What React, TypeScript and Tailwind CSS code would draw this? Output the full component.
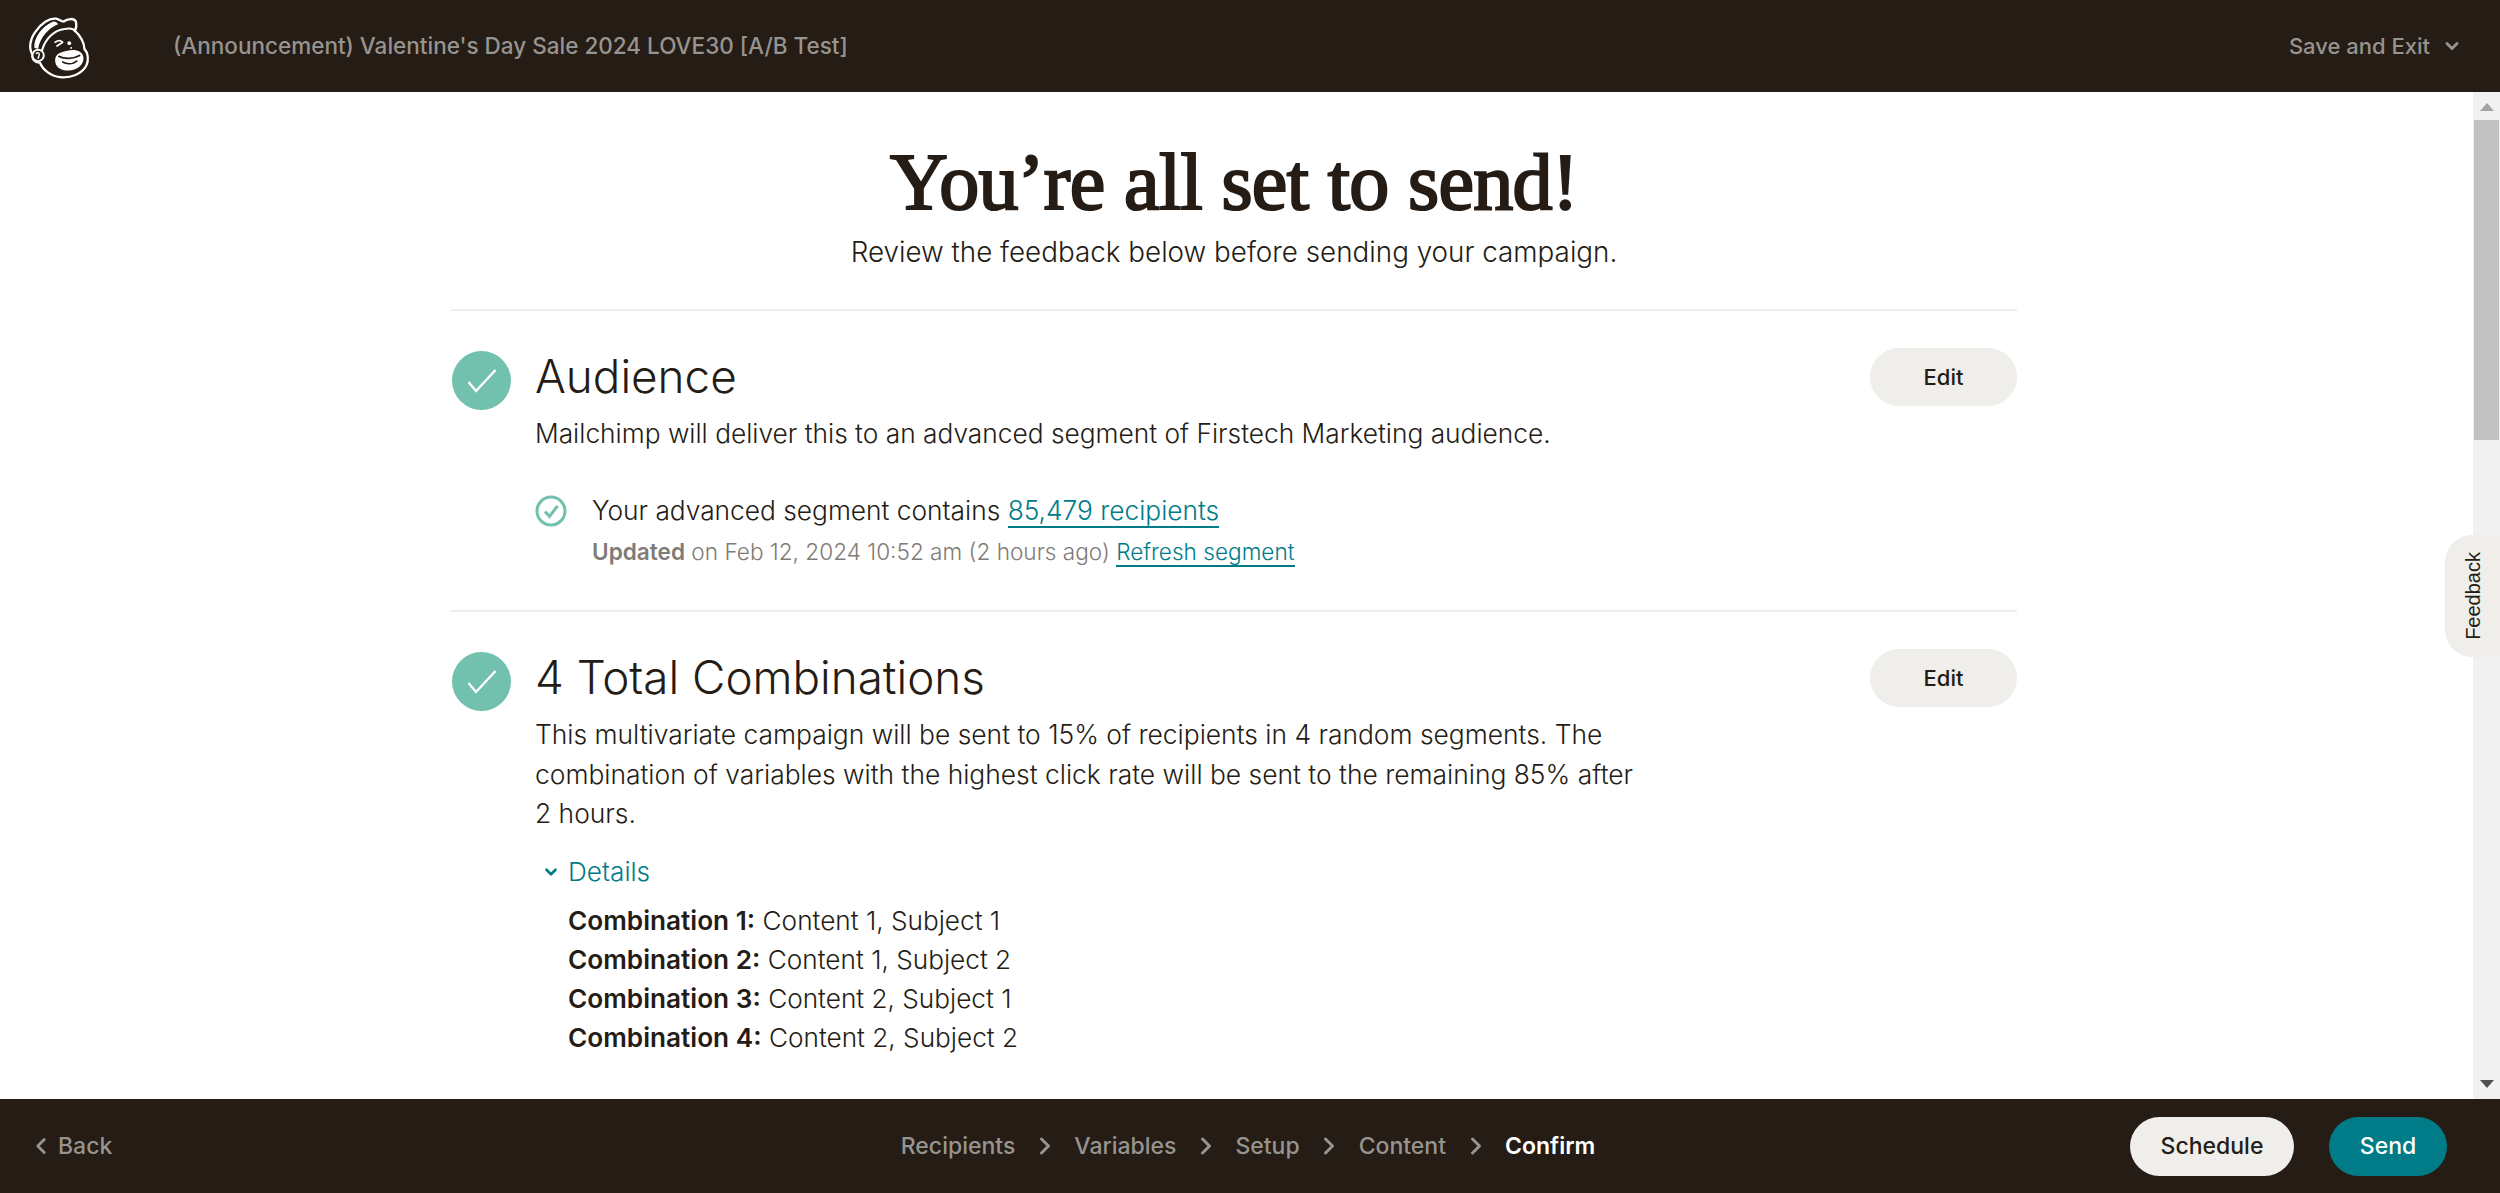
import React from "react";
import { ChevronDown, ChevronLeft, ChevronRight } from "lucide-react";

const Logo = () => (
  <svg viewBox="0 0 70 70" className="h-[66px] w-[66px]" fill="none" strokeLinecap="round" strokeLinejoin="round">
    <path d="M9 44C5 38 6 28 12 20 18 11 27 5 34 6c4 1 6 3 8 3 4-3 11-4 13 0 1 4 0 8-1 10 6 5 10 13 10 19 4 4 5 12 2 18-5 9-16 13-28 12-10-1-18-8-21-15-5 0-9-4-8-9Z" fill="#241c15" stroke="#fff" strokeWidth="2.4" />
    <path d="M11 37C10 28 18 14 31 9c3 0 5 2 5 3-10 4-19 14-21 26Z" fill="#fff" />
    <path d="M19 40c4-14 14-22 24-23 5-1 9-1 11 2" stroke="#fff" strokeWidth="2.2" />
    <circle cx="15" cy="45" r="6" fill="#241c15" stroke="#fff" strokeWidth="2" />
    <path d="M13 43c2-2 4 0 3 2l-1 3" stroke="#fff" strokeWidth="1.5" />
    <path d="M33 50c0-7 7-9 13-10 8-2 16 0 17 7 1 8-7 14-16 14-8 0-14-4-14-11Z" fill="#fff" />
    <path d="M37 46c6 3 15 3 22-1M41 52c5 3 11 2 15-1" stroke="#241c15" strokeWidth="1.8" />
    <path d="M33 31c3-2 6-2 8 0M35 35l6-4" stroke="#fff" strokeWidth="1.8" />
    <circle cx="48" cy="32" r="2" fill="#fff" />
    <circle cx="50" cy="37" r="1" fill="#fff" />
  </svg>
);

const BigCheck = () => (
  <div className="flex h-[59px] w-[59px] shrink-0 items-center justify-center rounded-full bg-[#72c0ae]">
    <svg viewBox="0 0 30 30" className="h-[30px] w-[30px]" fill="none" stroke="#fff" strokeWidth="2.4">
      <path d="M1.5 16L9 25 28.5 4" />
    </svg>
  </div>
);

const SmallCheck = () => (
  <svg viewBox="0 0 32 32" className="h-[32px] w-[32px] shrink-0" fill="none" stroke="#72c0ae" strokeWidth="3">
    <circle cx="16" cy="16" r="14" />
    <path d="M10 16.5l4.5 5L22.5 11" />
  </svg>
);

const EditButton = () => (
  <button className="h-[58px] w-[147px] shrink-0 rounded-full bg-[#efeeea] text-[22px] font-medium text-[#241c15]">Edit</button>
);

const steps = ["Recipients", "Variables", "Setup", "Content"];
const combinations = [
  ["Combination 1:", "Content 1, Subject 1"],
  ["Combination 2:", "Content 1, Subject 2"],
  ["Combination 3:", "Content 2, Subject 1"],
  ["Combination 4:", "Content 2, Subject 2"],
];

const App: React.FC = () => {
  return (
    <div className="flex h-screen flex-col overflow-hidden bg-white font-['Inter',sans-serif] text-[#241c15]">
      <header className="flex h-[92px] shrink-0 items-center justify-between bg-[#241c15] pl-[24px] pr-[38px]">
        <div className="flex items-center gap-[83px]">
          <Logo />
          <span className="text-[22.5px] font-medium text-[#97948f]">(Announcement) Valentine's Day Sale 2024 LOVE30 [A/B Test]</span>
        </div>
        <div className="flex items-center gap-[12px] text-[22px] font-medium text-[#97948f]">
          Save and Exit
          <ChevronDown size={20} strokeWidth={3.5} />
        </div>
      </header>

      <div className="relative flex min-h-0 flex-1">
        <main className="min-w-0 flex-1 overflow-hidden pl-[451px] pr-[456px]">
          <div className="pb-[39px] pt-[50px] text-center">
            <h1 className="font-['Liberation_Serif',serif] text-[80px] font-normal leading-[80px] tracking-[-0.65px] [-webkit-text-stroke:2.2px_#241c15]">You’re all set to send!</h1>
            <p className="mt-[12px] text-[27.8px] font-[350] leading-[36px]">Review the feedback below before sending your campaign.</p>
          </div>

          <section className="border-t-2 border-[#efeeea] pb-[42px] pt-[37px]">
            <div className="flex items-start gap-[24px]">
              <div className="ml-[1px] pt-[3px]"><BigCheck /></div>
              <div className="min-w-0 flex-1">
                <div className="flex items-center justify-between">
                  <h2 className="text-[45.8px] font-light leading-[58px]">Audience</h2>
                  <EditButton />
                </div>
                <p className="mt-[8px] text-[26.3px] font-[350] leading-[40px]">Mailchimp will deliver this to an advanced segment of Firstech Marketing audience.</p>
                <div className="mt-[37px] flex items-center gap-[25px]">
                  <SmallCheck />
                  <p className="text-[26.3px] font-[350] leading-[40px]">
                    Your advanced segment contains{" "}
                    <a className="border-b-2 border-[#007c89] text-[#007c89]">85,479 recipients</a>
                  </p>
                </div>
                <p className="ml-[57px] mt-[5px] text-[22.6px] font-[350] leading-[32px] text-[#7f7b76]">
                  <span className="font-semibold">Updated</span> on Feb 12, 2024 10:52 am (2 hours ago){" "}
                  <a className="border-b-2 border-[#007c89] text-[#007c89]">Refresh segment</a>
                </p>
              </div>
            </div>
          </section>

          <section className="border-t-2 border-[#efeeea] pt-[37px]">
            <div className="flex items-start gap-[24px]">
              <div className="ml-[1px] pt-[3px]"><BigCheck /></div>
              <div className="min-w-0 flex-1">
                <div className="flex items-center justify-between">
                  <h2 className="text-[45.8px] font-light leading-[58px]">4 Total Combinations</h2>
                  <EditButton />
                </div>
                <p className="mt-[8px] max-w-[1105px] text-[26.4px] font-[350] leading-[39.5px]">
                  This multivariate campaign will be sent to 15% of recipients in 4 random segments. The combination of variables with the highest click rate will be sent to the remaining 85% after 2 hours.
                </p>
                <div className="ml-[7px] mt-[18px] flex items-center gap-[8px] text-[26.2px] font-[350] leading-[40px] text-[#007c89]">
                  <ChevronDown size={18} strokeWidth={3.5} />
                  Details
                </div>
                <ul className="ml-[33px] mt-[9px] text-[26.2px] font-[350] leading-[39px]">
                  {combinations.map(([label, value]) => (
                    <li key={label}><b className="font-semibold">{label}</b> {value}</li>
                  ))}
                </ul>
              </div>
            </div>
          </section>
        </main>

        <aside className="flex w-[27px] shrink-0 flex-col items-center bg-[#f1f1f1]">
          <div className="mt-[11px] h-0 w-0 border-x-[7px] border-b-[8px] border-x-transparent border-b-[#a3a3a3]" />
          <div className="mt-[9px] h-[320px] w-[25px] bg-[#c1c1c1]" />
          <div className="mt-auto mb-[11px] h-0 w-0 border-x-[7px] border-t-[8px] border-x-transparent border-t-[#505050]" />
        </aside>

        <button className="absolute right-0 top-[443px] flex h-[122px] w-[55px] items-center justify-center rounded-l-[27px] bg-[#efeeea] font-['Liberation_Sans',sans-serif] text-[20px] text-[#241c15]">
          <span className="rotate-180 [writing-mode:vertical-rl]">Feedback</span>
        </button>
      </div>

      <footer className="grid h-[94px] shrink-0 grid-cols-[1fr_auto_1fr] items-center bg-[#241c15] pl-[28px] pr-[53px] text-[23px] font-medium text-[#97948f]">
        <div className="flex items-center gap-[4px]">
          <ChevronLeft size={26} strokeWidth={2.6} />
          Back
        </div>
        <nav className="ml-[21px] flex items-center gap-[15.5px]">
          {steps.map((step) => (
            <React.Fragment key={step}>
              <span>{step}</span>
              <ChevronRight size={28} strokeWidth={2.6} />
            </React.Fragment>
          ))}
          <span className="font-semibold text-white">Confirm</span>
        </nav>
        <div className="flex items-center justify-end gap-[35px]">
          <button className="h-[59px] w-[164px] rounded-full bg-[#efeeea] text-[#241c15]">Schedule</button>
          <button className="h-[59px] w-[118px] rounded-full bg-[#007c89] text-white">Send</button>
        </div>
      </footer>
    </div>
  );
};

export default App;
